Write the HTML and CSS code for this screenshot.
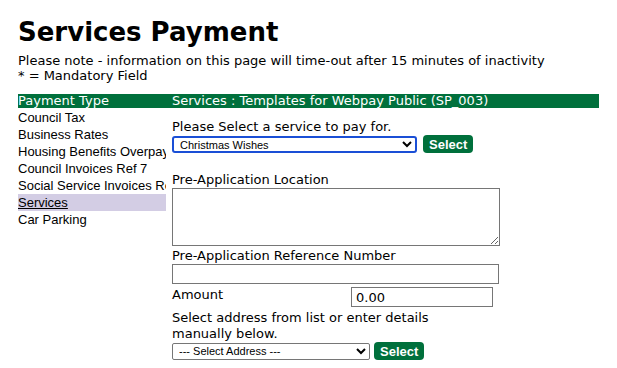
FILE: index.html
```html
<!DOCTYPE html>
<html lang="en">
<head>
    <meta charset="UTF-8">
    <title>Services Payment</title>
    <link rel="stylesheet" href="styles.css">
</head>
<body>
    <!-- Heading -->
    <h1 class="heading">Services Payment</h1>
    <p class="note">Please note - information on this page will time-out after 15 minutes of inactivity<br>* = Mandatory Field</p>

    <!-- Header bar -->
    <div class="bar">
        <div class="bar-left">Payment Type</div>
        <div class="bar-right">Services : Templates for Webpay Public (SP_003)</div>
    </div>

    <div class="layout">
        <!-- Payment types -->
        <ul class="types">
            <li>Council Tax</li>
            <li>Business Rates</li>
            <li>Housing Benefits Overpayments</li>
            <li>Council Invoices Ref 7</li>
            <li>Social Service Invoices Ref 8</li>
            <li class="active"><a href="#">Services</a></li>
            <li>Car Parking</li>
        </ul>

        <!-- Form -->
        <form class="pay-form">
            <label class="label first">Please Select a service to pay for.</label>
            <div class="row">
                <select class="service-select">
                    <option>Christmas Wishes</option>
                </select>
                <button type="button" class="btn">Select</button>
            </div>

            <label class="label loc">Pre-Application Location</label>
            <textarea class="area"></textarea>

            <label class="label">Pre-Application Reference Number</label>
            <input type="text" class="text-in">

            <div class="amount-row">
                <label class="label">Amount</label>
                <input type="text" class="amount" value="0.00">
            </div>

            <label class="label addr">Select address from list or enter details manually below.</label>
            <div class="row addr-row">
                <select class="addr-select">
                    <option>--- Select Address ---</option>
                </select>
                <button type="button" class="btn">Select</button>
            </div>
            <label class="label faded">Name</label>
        </form>
    </div>
</body>
</html>
```

FILE: styles.css
```css
/* General Styling */
body {
    font-family: "DejaVu Sans", Verdana, sans-serif;
    font-size: 13px;
    color: #000;
    margin: 0;
    padding: 0 18px;
    overflow: hidden;
}

.heading {
    font-size: 26px;
    font-weight: bold;
    margin: 17px 0 6px;
    line-height: 30px;
}

.note {
    margin: 0 0 11px;
    line-height: 15px;
}

/* Green header bar */
.bar {
    display: flex;
    width: 581px;
    background-color: #00703c;
    color: #fff;
    line-height: 14px;
}

.bar-left {
    width: 154px;
}

.layout {
    display: flex;
}

/* Payment type list */
.types {
    list-style: none;
    margin: 0 6px 0 0;
    padding: 1px 0 0;
    width: 148px;
    font-family: "Liberation Sans", Arial, sans-serif;
    font-size: 13px;
}

.types li {
    height: 17px;
    line-height: 17px;
    white-space: nowrap;
    overflow: hidden;
}

.types .active {
    background-color: #d3cde4;
}

.types a {
    color: #000;
}

/* Form */
.pay-form {
    display: flex;
    flex-direction: column;
    width: 330px;
}

.label {
    display: block;
    line-height: 16px;
}

.first {
    margin-top: 11px;
}

.loc {
    margin-top: 19px;
}

.row {
    display: flex;
    align-items: center;
    gap: 6px;
}

.addr-row {
    gap: 4px;
}

select {
    font-family: "Liberation Sans", Arial, sans-serif;
    font-size: 11px;
    height: 17px;
    border: 1px solid #767676;
    border-radius: 2px;
    background: #fff;
    padding: 0 2px;
}

.service-select {
    width: 245px;
    border: 2px solid #1a4fd6;
    border-radius: 3px;
}

.addr-select {
    width: 198px;
}

.btn {
    font-family: "Liberation Sans", Arial, sans-serif;
    font-size: 13px;
    font-weight: bold;
    color: #fff;
    background-color: #00703c;
    border: none;
    border-radius: 4px;
    height: 18px;
    padding: 0 6px;
}

.area {
    width: 322px;
    height: 52px;
    margin: 0 0 2px;
    border: 1px solid #767676;
    resize: vertical;
}

.text-in {
    width: 321px;
    height: 18px;
    margin: 0;
    padding: 0 2px;
    border: 1px solid #767676;
    font-family: "DejaVu Sans", Verdana, sans-serif;
    font-size: 13px;
}

.amount-row {
    display: flex;
    align-items: flex-start;
    margin-top: 3px;
}

.amount-row .label {
    width: 179px;
}

.amount {
    width: 132px;
    height: 18px;
    margin: 0;
    padding: 0 4px;
    border: 1px solid #767676;
    font-family: "DejaVu Sans", Verdana, sans-serif;
    font-size: 13px;
}

.addr {
    width: 280px;
    margin-top: 3px;
}

.faded {
    color: #999;
    margin-top: 5px;
}
```
